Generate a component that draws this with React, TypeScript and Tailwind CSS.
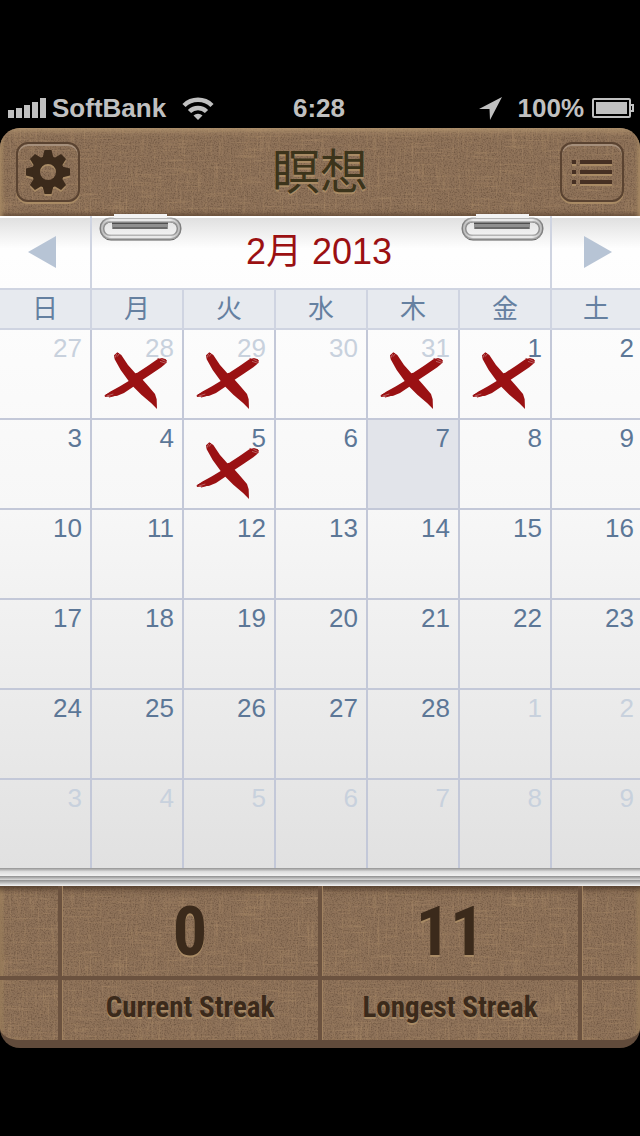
import type { ReactNode } from 'react'

const WEEKDAYS = ['日', '月', '火', '水', '木', '金', '土']

type Day = {
  n: number
  muted?: boolean
  today?: boolean
  done?: boolean
}

const TODAY = 7
const DAYS_IN_MONTH = 28

function buildDays(): Day[] {
  const before: Day[] = [
    { n: 27, muted: true },
    { n: 28, muted: true, done: true },
    { n: 29, muted: true, done: true },
    { n: 30, muted: true },
    { n: 31, muted: true, done: true },
  ]
  const month = Array.from({ length: DAYS_IN_MONTH }, (_, i) => ({
    n: i + 1,
    today: i + 1 === TODAY,
    done: i === 0 || i === 4,
  }))
  const after = Array.from({ length: 9 }, (_, i) => ({ n: i + 1, muted: true }))
  return [...before, ...month, ...after]
}

const days = buildDays()
const weeks = Array.from({ length: 6 }, (_, i) => days.slice(i * 7, i * 7 + 7))

function TextureDefs() {
  return (
    <svg width="0" height="0" className="absolute" aria-hidden="true">
      <filter id="grain" x="0" y="0" width="100%" height="100%" colorInterpolationFilters="sRGB">
        <feTurbulence type="fractalNoise" baseFrequency="0.7" numOctaves="2" seed="3" />
        <feColorMatrix values="0 0 0 0 0.2  0 0 0 0 0.13  0 0 0 0 0.08  0.8 0 0 0 -0.35" />
      </filter>
      <filter id="weft" x="0" y="0" width="100%" height="100%" colorInterpolationFilters="sRGB">
        <feTurbulence type="fractalNoise" baseFrequency="0.03 0.5" numOctaves="2" seed="8" />
        <feColorMatrix values="0 0 0 0 0.72  0 0 0 0 0.59  0 0 0 0 0.44  3 0 0 0 -1.6" />
      </filter>
      <filter id="warp" x="0" y="0" width="100%" height="100%" colorInterpolationFilters="sRGB">
        <feTurbulence type="fractalNoise" baseFrequency="0.5 0.03" numOctaves="2" seed="5" />
        <feColorMatrix values="0 0 0 0 0.72  0 0 0 0 0.59  0 0 0 0 0.44  3 0 0 0 -1.6" />
      </filter>
    </svg>
  )
}

function Linen() {
  return (
    <svg className="pointer-events-none absolute inset-0 h-full w-full" aria-hidden="true">
      <rect width="100%" height="100%" filter="url(#grain)" />
      <rect width="100%" height="100%" filter="url(#weft)" opacity="0.35" />
      <rect width="100%" height="100%" filter="url(#warp)" opacity="0.35" />
    </svg>
  )
}

function StatusBar() {
  return (
    <div className="grid h-10 grid-cols-[1fr_auto_1fr] items-center pr-1.5 pl-2 text-[26px] leading-10 font-bold text-[#c0c0c0]">
      <div className="flex items-center">
        <svg width="38" height="20" viewBox="0 0 38 20" fill="currentColor" className="mr-1.5">
          <rect x="0" y="12" width="6" height="8" />
          <rect x="8" y="10" width="6" height="10" />
          <rect x="16" y="7" width="6" height="13" />
          <rect x="24" y="4" width="6" height="16" />
          <rect x="32" y="0" width="6" height="20" />
        </svg>
        <span>SoftBank</span>
        <svg width="32" height="24" viewBox="0 0 32 24" fill="none" stroke="currentColor" className="ml-4">
          <path d="M2 9.500a20 20 0 0 1 28 0" strokeWidth="4.500" />
          <path d="M7.500 15.500a12 12 0 0 1 17 0" strokeWidth="4.500" />
          <path d="M16 24l-4.500-4.500a6.500 6.500 0 0 1 9 0z" fill="currentColor" stroke="none" />
        </svg>
      </div>
      <span className="pr-1">6:28</span>
      <div className="flex items-center justify-end">
        <svg width="23" height="23" viewBox="0 0 23 23" fill="currentColor" className="mr-4">
          <path d="M23 0L11 23L10.500 12L0 12z" />
        </svg>
        <span>100%</span>
        <svg width="42" height="20" viewBox="0 0 42 20" className="ml-2">
          <rect x="1" y="1" width="37" height="18" rx="1" fill="none" stroke="currentColor" strokeWidth="2" />
          <rect x="4" y="4" width="31" height="12" fill="currentColor" />
          <path d="M38 7h3v6h-3" fill="none" stroke="currentColor" strokeWidth="2" />
        </svg>
      </div>
    </div>
  )
}

function ToolButton({ label, children }: { label: string; children: ReactNode }) {
  return (
    <button
      type="button"
      aria-label={label}
      className="flex h-15 w-16 items-center justify-center rounded-xl border-2 border-[#5a4331] shadow-[0_2px_0_#a98b65,inset_0_2px_0_#a58f7b]"
    >
      {children}
    </button>
  )
}

function GearShape() {
  return (
    <g>
      {[0, 45, 90, 135, 180, 225, 270, 315].map((angle) => (
        <path key={angle} d="M-3.500 -22h7L6 -12h-12z" transform={`rotate(${angle})`} />
      ))}
      <path
        fillRule="evenodd"
        d="M0 -16a16 16 0 1 1 0 32a16 16 0 1 1 0 -32zM0 -8a8 8 0 1 0 0 16a8 8 0 1 0 0 -16z"
      />
    </g>
  )
}

function GearIcon() {
  return (
    <svg width="46" height="48" viewBox="-23 -24 46 48">
      <g fill="#a98b65" transform="translate(0 2)">
        <GearShape />
      </g>
      <g fill="#3b2a1b">
        <GearShape />
      </g>
    </svg>
  )
}

function ListIcon() {
  return (
    <svg width="40" height="24" viewBox="0 0 40 24" className="overflow-visible">
      {[0, 10, 20].map((y) => (
        <g key={y}>
          <path d={`M0 ${y + 2}h4v4h-4zM8 ${y + 2}h32v4h-32z`} fill="#a98b65" />
          <path d={`M0 ${y}h4v4h-4zM8 ${y}h32v4h-32z`} fill="#463023" />
        </g>
      ))}
    </svg>
  )
}

function Header() {
  return (
    <header className="relative overflow-hidden rounded-t-[20px] bg-[#8e7259]">
      <Linen />
      <div className="relative flex h-22 items-center justify-between px-4 shadow-[inset_0_6px_6px_-3px_#b2956f,inset_5px_0_4px_-3px_#a98b65,inset_-5px_0_4px_-3px_#a98b65,inset_0_-4px_4px_-2px_#5f4836]">
        <ToolButton label="設定">
          <GearIcon />
        </ToolButton>
        <h1 className="pt-0.5 text-[48px] leading-none font-normal text-[#3c341b] [text-shadow:0_2px_0_#a98b65]">
          瞑想
        </h1>
        <ToolButton label="一覧">
          <ListIcon />
        </ToolButton>
      </div>
    </header>
  )
}

function Clip({ className }: { className: string }) {
  return (
    <svg width="84" height="28" viewBox="0 0 84 28" className={`absolute -top-0.5 ${className}`} aria-hidden="true">
      <defs>
        <linearGradient id="rim" gradientUnits="userSpaceOnUse" x1="2" y1="0" x2="83" y2="0">
          <stop offset="0" stopColor="#7d7d7d" />
          <stop offset="0.14" stopColor="#b4b4b4" />
          <stop offset="0.86" stopColor="#b4b4b4" />
          <stop offset="1" stopColor="#7d7d7d" />
        </linearGradient>
        <linearGradient id="metal" gradientUnits="userSpaceOnUse" x1="2" y1="0" x2="83" y2="0">
          <stop offset="0" stopColor="#b5b5b5" />
          <stop offset="0.14" stopColor="#e9e9e9" />
          <stop offset="0.86" stopColor="#e9e9e9" />
          <stop offset="1" stopColor="#b5b5b5" />
        </linearGradient>
      </defs>
      <rect x="14" y="8" width="56" height="7" fill="#8f8f8f" />
      <path d="M14 9h56" stroke="#4f4f4f" strokeWidth="2" />
      <path d="M15 14h54" stroke="#6a6a6a" strokeWidth="2" />
      <rect x="4" y="7" width="77" height="18" rx="9" fill="none" stroke="#5d5d5d" strokeWidth="3" />
      <rect x="4" y="6" width="77" height="17" rx="8" fill="none" stroke="url(#rim)" strokeWidth="5" />
      <rect x="4" y="6" width="77" height="17" rx="8" fill="none" stroke="url(#metal)" strokeWidth="2" />
      <rect x="16" y="0" width="53" height="4" fill="#f3f3f3" />
    </svg>
  )
}

function MonthBar() {
  return (
    <div className="grid h-[74px] grid-cols-[92fr_460fr_88fr] border-b-2 border-[#cfd4e1] bg-linear-to-b from-[#dedede] to-transparent to-45% shadow-[inset_0_2px_0_#fff]">
      <button
        type="button"
        aria-label="前の月"
        className="flex items-center justify-center border-r-2 border-[#cfd4e1] pr-1.5"
      >
        <svg width="28" height="32" viewBox="0 0 28 32" fill="#b7c4d5">
          <path d="M28 0v32L0 16z" />
        </svg>
      </button>
      <h2 className="flex items-center justify-center border-r-2 border-[#cfd4e1] pr-1 text-[36px] leading-none font-normal text-[#9b1012]">
        2月 2013
      </h2>
      <button type="button" aria-label="次の月" className="flex items-center justify-center pl-1">
        <svg width="28" height="32" viewBox="0 0 28 32" fill="#b7c4d5">
          <path d="M0 0v32l28-16z" />
        </svg>
      </button>
    </div>
  )
}

// brush strokes are drawn at three times their size on the page
function Cross() {
  return (
    <svg
      width="76"
      height="68"
      viewBox="0 0 228 204"
      fill="#9a1113"
      className="pointer-events-none absolute top-4 left-1.5"
      aria-hidden="true"
    >
      <path d="M50 40L48 28L58 19L70 27L90 57L112 82L118 80L150 59L178 40L192 36L204 40L206 50L190 64L160 84L134 101L150 119L171 144L176 160L177 189L160 172L130 146L106 122L78 141L58 149L42 151L22 153L19 149L36 137L66 121L92 105L68 72z" />
      <path
        d="M24 146L50 138M34 153L56 147M180 38L202 48M186 62L206 44M50 34L62 22"
        stroke="#9a1113"
        strokeWidth="3"
        strokeLinecap="round"
      />
      <path
        d="M26 150L46 144M190 40L203 46M186 46L204 52M50 36L56 24M57 32L64 23"
        stroke="#fafafa"
        strokeOpacity="0.5"
        strokeWidth="2"
      />
    </svg>
  )
}

function dayColor(day: Day) {
  return day.muted ? 'text-[#c8d1dd]' : 'text-[#5c7797]'
}

function Calendar() {
  return (
    <main className="relative bg-linear-to-b from-white via-[#f7f7f7] via-45% to-[#e1e1e1]">
      <MonthBar />
      <Clip className="left-[98px]" />
      <Clip className="right-24" />
      <table className="w-full table-fixed border-separate border-spacing-0">
        <colgroup>
          {WEEKDAYS.map((name, i) => (
            <col key={name} className={i < 6 ? 'w-[14.375%]' : 'w-[13.75%]'} />
          ))}
        </colgroup>
        <thead>
          <tr>
            {WEEKDAYS.map((name) => (
              <th
                key={name}
                scope="col"
                className="h-10 border-r-2 border-b-2 border-[#cfd4e1] bg-[#e7eaef] p-0 text-[26px] leading-[38px] font-normal text-[#6580a0] last:border-r-0"
              >
                {name}
              </th>
            ))}
          </tr>
        </thead>
        <tbody>
          {weeks.map((week, w) => (
            <tr key={w} className="group">
              {week.map((day, d) => (
                <td
                  key={d}
                  className={`relative border-r-2 border-b-2 border-[#c3c8d8] p-0 group-last:border-b-0 last:border-r-0 ${day.today ? 'bg-[#e2e4ea]' : ''}`}
                >
                  <button
                    type="button"
                    className={`flex h-22 w-full justify-end pt-1 text-[26px] leading-7 ${d === 6 ? 'pr-1.5' : 'pr-2'} ${dayColor(day)}`}
                  >
                    {day.n}
                  </button>
                  {day.done && <Cross />}
                </td>
              ))}
            </tr>
          ))}
        </tbody>
      </table>
    </main>
  )
}

function PageEdges() {
  return (
    <div>
      <div className="h-2 bg-linear-to-b from-[#939393] via-[#dedede] via-45% to-[#f2f2f2]" />
      <div className="h-1 bg-linear-to-b from-[#8f8f8f] to-[#dcdcdc]" />
      <div className="h-1.5 bg-linear-to-b from-[#8f8f8f] to-[#f6f6f6]" />
    </div>
  )
}

function Streak({ label, value }: { label: string; value: number }) {
  return (
    <dl className="flex flex-col-reverse border-r-4 border-[#6b523f] text-center font-['Roboto_Condensed','Lato',sans-serif] font-bold text-[#3b2a1b] shadow-[inset_1px_0_0_#a08260] [text-shadow:0_2px_0_#a98b65]">
      <dt className="h-15 text-[29px] leading-[54px]">{label}</dt>
      <dd className="h-[94px] border-b-4 border-[#6b523f] text-[68px] leading-[92px]">{value}</dd>
    </dl>
  )
}

function SidePanel({ className }: { className: string }) {
  return (
    <div className={`border-[#6b523f] ${className}`}>
      <div className="h-[94px] border-b-4 border-[#6b523f]" />
    </div>
  )
}

function Footer() {
  return (
    <footer className="relative overflow-hidden rounded-b-[20px] border-b-8 border-[#614b3b] bg-[#8e7259]">
      <Linen />
      <div className="relative grid grid-cols-[62fr_260fr_260fr_58fr] shadow-[inset_0_6px_6px_-3px_#513c2c,inset_5px_0_4px_-3px_#a98b65,inset_-5px_0_4px_-3px_#a98b65]">
        <SidePanel className="border-r-4" />
        <Streak label="Current Streak" value={0} />
        <Streak label="Longest Streak" value={11} />
        <SidePanel className="shadow-[inset_1px_0_0_#a08260]" />
      </div>
    </footer>
  )
}

export default function App() {
  return (
    <div className="min-h-screen bg-black pt-22 font-['Liberation_Sans','Noto_Sans_CJK_JP',sans-serif]">
      <TextureDefs />
      <StatusBar />
      <Header />
      <Calendar />
      <PageEdges />
      <Footer />
    </div>
  )
}
